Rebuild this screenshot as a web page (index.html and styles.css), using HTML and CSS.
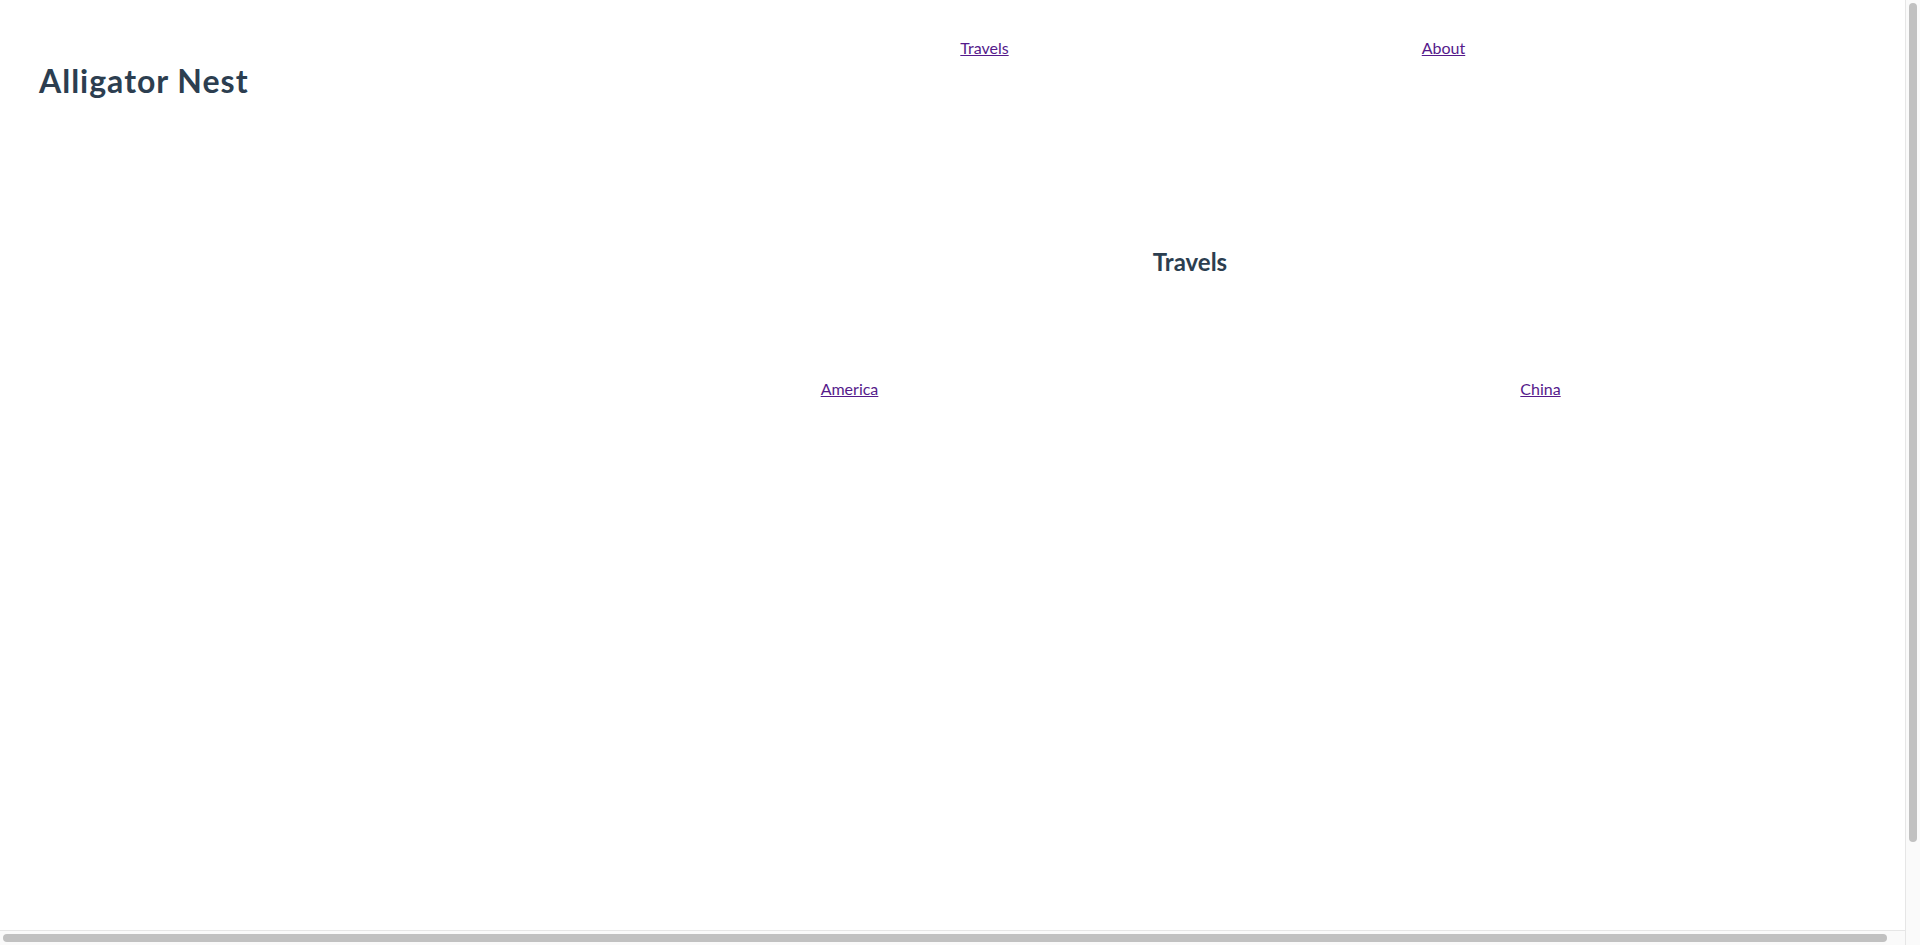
FILE: index.html
```html
<!DOCTYPE html>
<html lang="en">
<head>
<meta charset="utf-8">
<title>Alligator Nest</title>
<link rel="stylesheet" href="styles.css">
</head>
<body>
<div class="window">
  <div class="viewport">
    <div class="app">
      <header class="site-header">
        <h1 class="brand">Alligator Nest</h1>
        <nav class="nav">
          <a class="nav-link" href="#travels">Travels</a>
          <a class="nav-link" href="#about">About</a>
        </nav>
      </header>
      <main class="main">
        <h2 class="page-title">Travels</h2>
        <div class="countries">
          <a class="country" href="#america">America</a>
          <a class="country" href="#china">China</a>
        </div>
      </main>
    </div>
  </div>
  <div class="scroll-track scroll-track-v"><div class="scroll-thumb scroll-thumb-v"></div></div>
  <div class="scroll-track scroll-track-h"><div class="scroll-thumb scroll-thumb-h"></div></div>
  <div class="scroll-corner"></div>
</div>
</body>
</html>
```

FILE: styles.css
```css
html,
body {
  margin: 0;
  height: 100%;
  overflow: hidden;
  background: #ffffff;
}

body {
  font-family: Lato, "Liberation Sans", sans-serif;
  color: #2c3e50;
  -webkit-font-smoothing: antialiased;
}

.window {
  display: grid;
  grid-template-columns: 1fr 15px;
  grid-template-rows: 1fr 15px;
  width: 100vw;
  height: 100vh;
}

.viewport {
  overflow: hidden;
  min-width: 0;
  min-height: 0;
}

.scroll-track {
  background: #fafafa;
  display: flex;
}

.scroll-track-v {
  border-left: 1px solid #e6e6e6;
  padding: 3px 3px 88px 3px;
}

.scroll-track-h {
  border-top: 1px solid #e6e6e6;
  padding: 3px 18px 3px 3px;
}

.scroll-thumb {
  background: #c1c1c1;
  border-radius: 4px;
}

.scroll-thumb-v {
  width: 8px;
  flex: 1;
}

.scroll-thumb-h {
  height: 8px;
  flex: 1;
}

.scroll-corner {
  background: #fafafa;
  border-left: 1px solid #e6e6e6;
}

.app {
  width: 1920px;
  min-height: 1024px;
}

.site-header {
  display: flex;
  align-items: flex-start;
  padding-left: 39px;
}

.brand {
  margin: 62px 0 0;
  width: 716px;
  flex: none;
  font-size: 32px;
  line-height: 38px;
  font-weight: 700;
  letter-spacing: 1px;
}

.nav {
  display: grid;
  grid-template-columns: 459px 459px;
  margin-top: 38px;
  text-align: center;
  font-size: 16px;
  line-height: 20px;
}

a {
  color: #551a8b;
}

.nav-link,
.country {
  justify-self: center;
}

.main {
  padding-left: 460px;
  margin-top: 148px;
}

.page-title {
  margin: 0;
  text-align: center;
  font-size: 24px;
  line-height: 28px;
  font-weight: 700;
}

.countries {
  display: grid;
  grid-template-columns: 1fr 1fr;
  padding: 0 34px 0 44px;
  margin-top: 103px;
  font-size: 16px;
  line-height: 20px;
}
```
